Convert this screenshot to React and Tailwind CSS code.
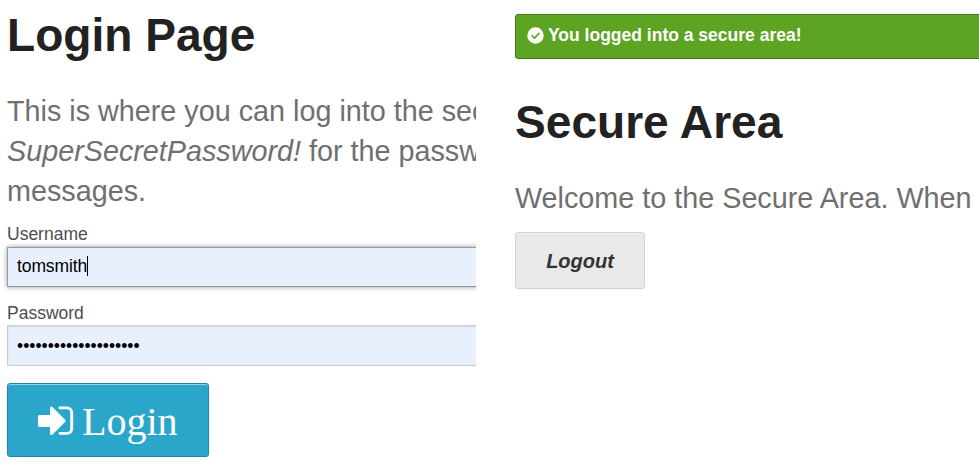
function LoginIcon() {
  return (
    <svg className="mt-[2px] h-[30px] w-[36px] shrink-0" viewBox="0 0 36 30" fill="white">
      <path d="M1.500 9H12V2.200c0-1.500 1.500-2.100 2.500-1.100l12.600 12.600c.7.700.7 1.600 0 2.300L14.500 28.500c-1 1-2.500.4-2.500-1.100v-6.400H1.500C.7 21 0 20.300 0 19.500v-9C0 9.700.7 9 1.500 9Z" />
      <path d="M22 1.900h7a4.700 4.700 0 0 1 4.700 4.700v16.100a4.700 4.700 0 0 1-4.700 4.700h-7" fill="none" stroke="white" strokeWidth="2.900" strokeLinecap="round" />
    </svg>
  );
}

function LoginPane() {
  return (
    <section className="w-[476px] shrink-0 overflow-hidden pl-[7px]">
      <h2 className="mt-[3px] h-[64px] whitespace-nowrap text-[46.100px] leading-[64px] font-bold text-[#222]">Login Page</h2>
      <h4 className="mt-[24px] text-[28.750px] leading-[40px] whitespace-nowrap text-[#6f6f6f]">
        <div>This is where you can log into the sec</div>
        <div><em>SuperSecretPassword!</em> for the passw</div>
        <div>messages.</div>
      </h4>
      <form className="w-[600px]">
        <label className="mt-[10px] block h-[26px] text-[17.500px] leading-[26px] text-[#4d4d4d]">Username</label>
        <div className="flex h-[40px] items-center border border-[#999] bg-[#e8f0fe] pb-[2px] pl-[9px] text-[17.500px] text-black shadow-[0_0_5px_#999]">
          <span className="tracking-[-0.1px]">tomsmith</span>
          <span className="h-[20px] w-px bg-black" />
        </div>
        <label className="mt-[13px] block h-[25px] text-[17.500px] leading-[26px] text-[#4d4d4d]">Password</label>
        <div className="flex h-[41px] items-center border border-[#ccc] bg-[#e8f0fe] px-[9px] pt-[2px] text-[17.500px] text-black shadow-[inset_0_1px_2px_rgba(0,0,0,0.1)]">
          ••••••••••••••••••••
        </div>
        <button type="button" className="mt-[17px] flex h-[74px] w-[202px] items-center rounded-[3px] border border-[#2284a1] bg-[#2ba6cb] pl-[30px] text-white shadow-[0_1px_0_rgba(255,255,255,0.5)_inset]">
          <LoginIcon />
          <span className="ml-[8px] pt-[4px] font-['Liberation_Serif',serif] text-[40px] leading-[46px]">Login</span>
        </button>
      </form>
    </section>
  );
}

function SecurePane() {
  return (
    <section className="ml-[39px] w-[464px] shrink-0 overflow-hidden pt-[14px]">
      <div className="flex h-[45px] w-[600px] items-center rounded-[3px] border border-[#457a1a] bg-[#5da423] pb-[3px] pl-[11px] text-white">
        <svg className="size-[17px]" viewBox="0 0 17 17">
          <circle cx="8.500" cy="8.500" r="8.200" fill="white" />
          <path d="m5 8.700 2.500 2.400 4.600-4.700" fill="none" stroke="#5da423" strokeWidth="1.600" strokeLinecap="round" strokeLinejoin="round" />
        </svg>
        <span className="ml-[4px] text-[17.500px] font-bold">You logged into a secure area!</span>
      </div>
      <h2 className="mt-[31px] h-[64px] whitespace-nowrap text-[46.100px] leading-[64px] font-bold text-[#222]">Secure Area</h2>
      <h4 className="mt-[24px] text-[28.750px] leading-[40px] whitespace-nowrap text-[#6f6f6f]">Welcome to the Secure Area. When</h4>
      <button type="button" className="mt-[14px] h-[57px] w-[130px] rounded-[3px] border border-[#d0d0d0] bg-[#e9e9e9] text-[20px] font-bold italic text-[#333] shadow-[0_1px_0_rgba(255,255,255,0.5)_inset]">Logout</button>
    </section>
  );
}

export default function App() {
  return (
    <main className="flex h-[472px] w-[979px] overflow-hidden bg-white font-['Liberation_Sans',Arial,sans-serif]">
      <LoginPane />
      <SecurePane />
    </main>
  );
}
